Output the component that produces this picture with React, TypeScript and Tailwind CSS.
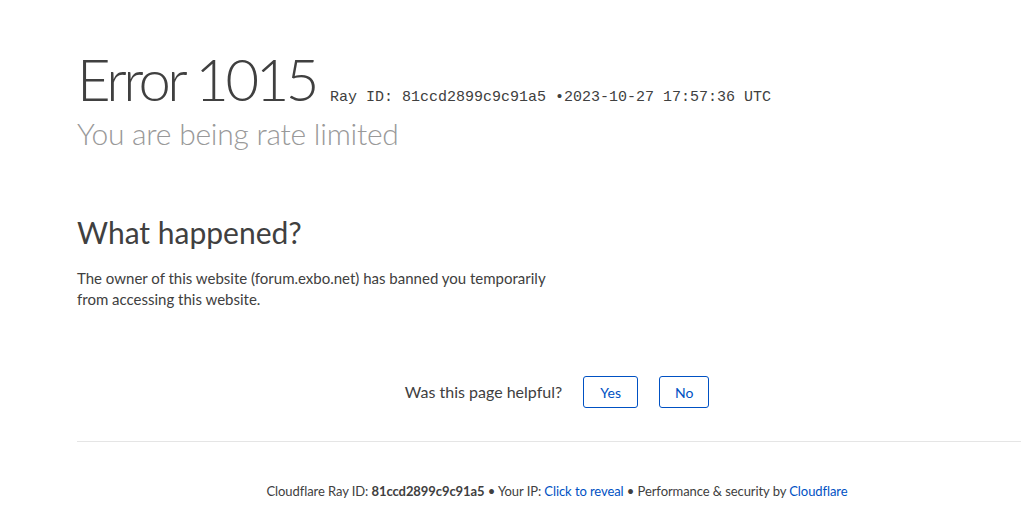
import React from "react";

export default function App() {
  return (
    <div className="w-[1021px] h-[519px] overflow-hidden bg-white text-[#404040]" style={{ fontFamily: 'Lato, "Open Sans", sans-serif' }}>
      <div className="ml-[77px] w-[960px]">
        <div className="pt-[44px] flex items-baseline">
          <h1 className="text-[58px] font-light leading-[70px] tracking-[-3.5px]">Error 1015</h1>
          <span className="ml-[14px] text-[15px] text-[#404040]" style={{ fontFamily: '"Liberation Mono", monospace' }}>
            Ray ID: 81ccd2899c9c91a5 •2023-10-27 17:57:36 UTC
          </span>
        </div>
        <h2 className="text-[30px] font-light leading-[36px] text-[#999999] mt-[1px] tracking-[-0.25px]">You are being rate limited</h2>
        <h2 className="mt-[63px] text-[30px] font-normal leading-[36px]">What happened?</h2>
        <p className="mt-[18px] text-[15px] leading-[21px] w-[500px]">
          The owner of this website (forum.exbo.net) has banned you temporarily from accessing this website.
        </p>
        <div className="mt-[66px] flex justify-center items-center gap-[21px]">
          <span className="text-[16px]">Was this page helpful?</span>
          <button className="w-[55px] h-[32px] border border-[#0051c3] rounded-[3px] text-[#0051c3] text-[14px]">Yes</button>
          <button className="w-[50px] h-[32px] border border-[#0051c3] rounded-[3px] text-[#0051c3] text-[14px]">No</button>
        </div>
        <div className="mt-[33px] border-t border-[#e5e5e5]" />
        <div className="mt-[40px] text-center text-[13px] tracking-[-0.08px]">
          Cloudflare Ray ID: <span className="font-bold">81ccd2899c9c91a5</span> • Your IP: <span className="text-[#0051c3]">Click to reveal</span> • Performance &amp; security by <span className="text-[#0051c3]">Cloudflare</span>
        </div>
      </div>
    </div>
  );
}
